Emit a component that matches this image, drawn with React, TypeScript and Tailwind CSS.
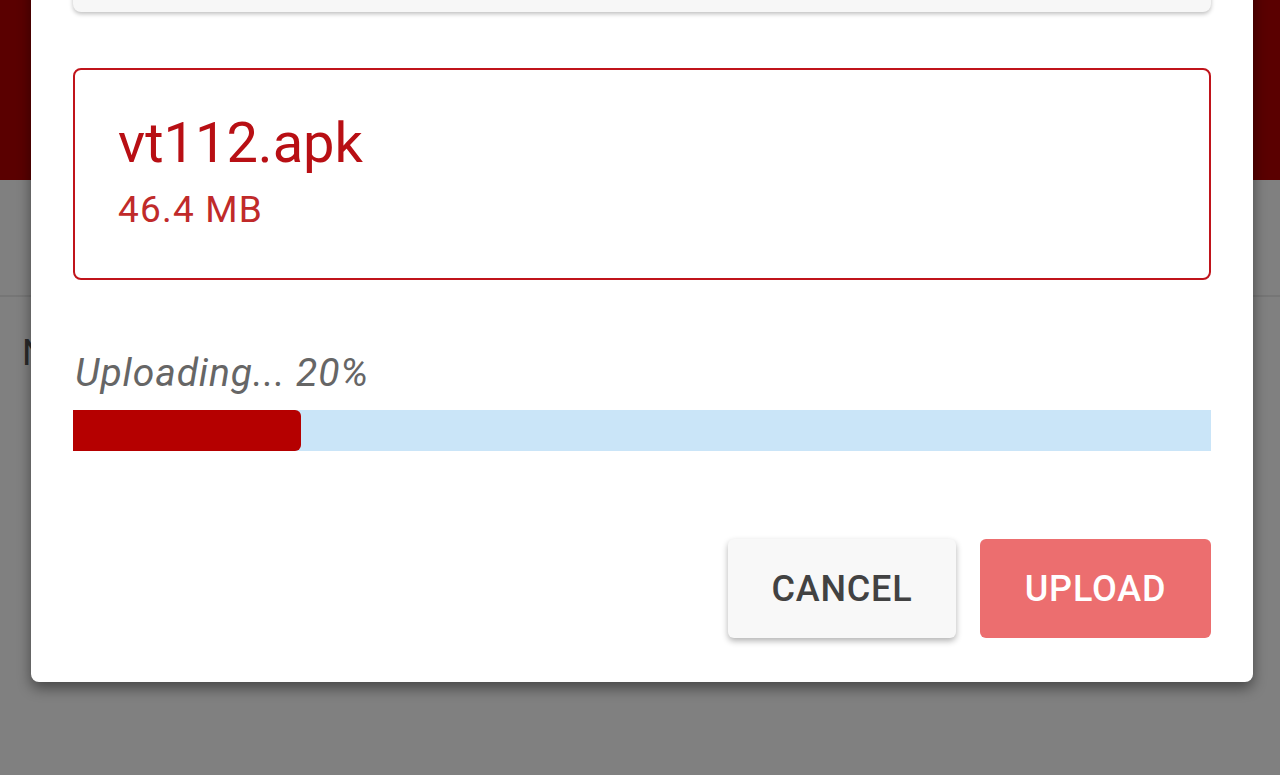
export default function App() {
  const progress = 20;

  return (
    <div className="relative h-[775px] w-[1280px] overflow-hidden bg-[#808080] font-['Roboto',sans-serif]">
      {/* dimmed page behind the dialog */}
      <div className="h-[180px] bg-[#5a0000]" />
      <div className="h-[115px]" />
      <div className="h-[2px] bg-[#767676]" />
      <div className="pl-[22px] pt-[38px] text-[36px] leading-none text-[#2a2a2a]">N</div>

      {/* dialog */}
      <div className="absolute left-[31px] top-[-60px] flex w-[1222px] flex-col rounded-[8px] bg-white px-[42px] pt-[22px] pb-[44px] shadow-[0_6px_14px_rgba(0,0,0,0.45)]">
        <div className="h-[50px] rounded-[8px] bg-[#f7f7f7] shadow-[0_2px_4px_rgba(0,0,0,0.25)]" />

        <div className="mt-[56px] h-[212px] rounded-[8px] border-2 border-[#c0141b] pl-[43px] pt-[45px]">
          <div className="text-[56px] leading-none text-[#b80f14]">vt112.apk</div>
          <div className="mt-[20px] text-[37px] leading-none tracking-[1.2px] text-[#c02a2a]">46.4 MB</div>
        </div>

        <div className="mt-[74px] pl-[2px] text-[39px] italic leading-none tracking-[0.9px] text-[#666666]">Uploading... {progress}%</div>
        <div className="mt-[17px] h-[41px] bg-[#cae5f8]">
          <div className="h-full rounded-r-[6px] bg-[#b50000]" style={{ width: `${progress}%` }} />
        </div>

        <div className="mt-[88px] flex justify-end gap-[24px]">
          <button className="h-[99px] w-[228px] rounded-[6px] bg-[#f8f8f8] text-[36px] font-medium tracking-[0.8px] text-[#424242] shadow-[0_3px_6px_rgba(0,0,0,0.3)]">
            CANCEL
          </button>
          <button className="h-[99px] w-[231px] rounded-[6px] bg-[#ec6e6f] text-[36px] font-medium tracking-[0.8px] text-white">
            UPLOAD
          </button>
        </div>
      </div>
    </div>
  );
}
